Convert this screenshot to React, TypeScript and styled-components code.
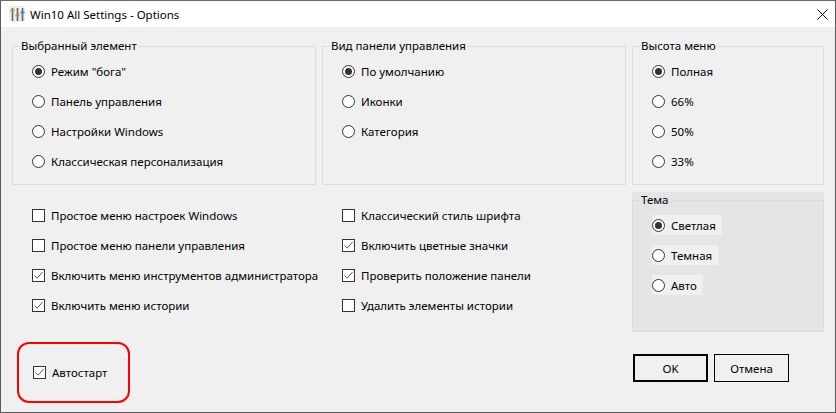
import * as React from 'react';
import styled, { createGlobalStyle } from 'styled-components';

const GlobalStyle = createGlobalStyle`
  html, body {
    margin: 0;
    padding: 0;
    background: #3a3a3a;
  }
`;

const Window = styled.div`
  box-sizing: border-box;
  width: 836px;
  height: 413px;
  display: flex;
  flex-direction: column;
  border: 1px solid #5a5a5a;
  border-top-color: #6a6a6a;
  background: #f0f0f0;
  color: #000;
  font-family: "Noto Sans", "Open Sans", sans-serif;
  font-size: 11.5px;
  overflow: hidden;
`;

const TitleBar = styled.div`
  flex: none;
  height: 26px;
  display: flex;
  align-items: center;
  background: #fff;
  padding-left: 8px;
`;

const TitleText = styled.span`
  margin-left: 5px;
  white-space: nowrap;
`;

const CloseIcon = styled.svg`
  margin-left: auto;
  margin-right: 7px;
  width: 11px;
  height: 11px;
`;

const Body = styled.div`
  flex: 1;
  display: flex;
  flex-direction: column;
  padding: 13px 11px 0 11px;
`;

const Row = styled.div`
  display: grid;
  grid-template-columns: 304px 304px 192px;
  column-gap: 6px;
`;

const Group = styled.fieldset`
  box-sizing: border-box;
  margin: 0;
  min-width: 0;
  height: 145px;
  padding: 0 0 0 19px;
  border: 1px solid #dcdcdc;
`;

const Legend = styled.legend`
  padding: 0 1px;
  margin-left: -12px;
  line-height: 12px;
`;

const OptionList = styled.div`
  display: flex;
  flex-direction: column;
  gap: 10px;
  padding-top: 9px;
`;

const ThemePanel = styled.div`
  box-sizing: border-box;
  height: 140px;
  margin-top: 7px;
  background: #e5e5e5;
  padding-top: 8px;
`;

const ThemeBorder = styled.div`
  box-sizing: border-box;
  height: 132px;
  border: 1px solid #dcdcdc;
  padding-left: 19px;
`;

const ThemeLegend = styled.span`
  display: block;
  width: fit-content;
  margin: -9px 0 0 -12px;
  padding: 0 1px;
  background: #e5e5e5;
  line-height: 16px;
`;

const ThemeOptions = styled(OptionList)`
  padding-top: 7px;
`;

const Option = styled.label<{ $boxed?: boolean }>`
  height: 20px;
  width: fit-content;
  display: flex;
  align-items: center;
  gap: 6px;
  white-space: nowrap;
  padding-right: ${p => (p.$boxed ? '6px' : '0')};
  background: ${p => (p.$boxed ? '#f0f0f0' : 'transparent')};
`;

const RadioMark = styled.span<{ $on?: boolean }>`
  box-sizing: border-box;
  flex: none;
  width: 13px;
  height: 13px;
  border-radius: 50%;
  border: 1px solid #333;
  background: #fff;
  display: flex;
  align-items: center;
  justify-content: center;

  &::after {
    content: "";
    display: ${p => (p.$on ? 'block' : 'none')};
    width: 7px;
    height: 7px;
    border-radius: 50%;
    background: #333;
  }
`;

const CheckBox = styled.span`
  box-sizing: border-box;
  flex: none;
  width: 13px;
  height: 13px;
  border: 1px solid #333;
  background: #fff;
  display: flex;
`;

const Settings = styled.div`
  grid-column: 1 / 3;
  display: grid;
  grid-template-columns: 310px 300px;
  padding: 11px 0 0 20px;
`;

const Footer = styled.div`
  display: flex;
  justify-content: space-between;
  align-items: flex-start;
  margin-top: 10px;
`;

const Highlight = styled.div`
  box-sizing: border-box;
  width: 113px;
  height: 61px;
  margin-left: 5px;
  padding-left: 14px;
  display: flex;
  align-items: center;
  border: 2px solid #f00;
  border-radius: 12px;
`;

const Buttons = styled.div`
  display: flex;
  gap: 6px;
  margin: 12px 35px 0 0;
`;

const Button = styled.button<{ $primary?: boolean }>`
  box-sizing: border-box;
  width: 75px;
  height: 28px;
  padding: 0;
  border: ${p => (p.$primary ? '2px' : '1px')} solid #000;
  border-radius: 0;
  background: #f0f0f0;
  font: inherit;
  color: #000;
`;

const IconTile = styled.span`
  flex: none;
  width: 16px;
  height: 16px;
  display: flex;
  background: #eeeeee;
  border-radius: 2px;
`;

const Radio = ({ label, on, boxed }: { label: string; on?: boolean; boxed?: boolean }) => (
  <Option $boxed={boxed}>
    <RadioMark $on={on} />
    {label}
  </Option>
);

const Check = ({ label, on }: { label: string; on?: boolean }) => (
  <Option>
    <CheckBox>
      {on && (
        <svg width="11" height="11" viewBox="0 0 11 11">
          <path d="M1.5 5.5 L4.2 8.2 L9.7 1.8" fill="none" stroke="#555" strokeWidth="1" />
        </svg>
      )}
    </CheckBox>
    {label}
  </Option>
);

const AppIcon = () => (
  <IconTile>
    <svg width="16" height="16" viewBox="0 0 16 16">
      <path d="M3.5 2v13M8.5 2v13M13.5 2v13" stroke="#666" strokeWidth="1.6" />
      <path d="M1.5 4.5h4" stroke="#7ab648" strokeWidth="2" />
      <path d="M6.5 9.5h4" stroke="#e8762c" strokeWidth="2" />
      <path d="M11.5 6.5h4" stroke="#2f8fe0" strokeWidth="2" />
    </svg>
  </IconTile>
);

const App = () => (
  <>
    <GlobalStyle />
    <Window>
      <TitleBar>
        <AppIcon />
        <TitleText>Win10 All Settings - Options</TitleText>
        <CloseIcon viewBox="0 0 11 11">
          <path d="M0.5 0.5 L10.5 10.5 M10.5 0.5 L0.5 10.5" stroke="#111" strokeWidth="1" />
        </CloseIcon>
      </TitleBar>
      <Body>
        <Row>
          <Group>
            <Legend>Выбранный элемент</Legend>
            <OptionList>
              <Radio label={'Режим "бога"'} on />
              <Radio label="Панель управления" />
              <Radio label="Настройки Windows" />
              <Radio label="Классическая персонализация" />
            </OptionList>
          </Group>
          <Group>
            <Legend>Вид панели управления</Legend>
            <OptionList>
              <Radio label="По умолчанию" on />
              <Radio label="Иконки" />
              <Radio label="Категория" />
            </OptionList>
          </Group>
          <Group>
            <Legend>Высота меню</Legend>
            <OptionList>
              <Radio label="Полная" on />
              <Radio label="66%" />
              <Radio label="50%" />
              <Radio label="33%" />
            </OptionList>
          </Group>
        </Row>
        <Row>
          <Settings>
            <OptionList>
              <Check label="Простое меню настроек Windows" />
              <Check label="Простое меню панели управления" />
              <Check label="Включить меню инструментов администратора" on />
              <Check label="Включить меню истории" on />
            </OptionList>
            <OptionList>
              <Check label="Классический стиль шрифта" />
              <Check label="Включить цветные значки" on />
              <Check label="Проверить положение панели" on />
              <Check label="Удалить элементы истории" />
            </OptionList>
          </Settings>
          <ThemePanel>
            <ThemeBorder>
              <ThemeLegend>Тема</ThemeLegend>
              <ThemeOptions>
                <Radio label="Светлая" on boxed />
                <Radio label="Темная" boxed />
                <Radio label="Авто" boxed />
              </ThemeOptions>
            </ThemeBorder>
          </ThemePanel>
        </Row>
        <Footer>
          <Highlight>
            <Check label="Автостарт" on />
          </Highlight>
          <Buttons>
            <Button $primary>OK</Button>
            <Button>Отмена</Button>
          </Buttons>
        </Footer>
      </Body>
    </Window>
  </>
);

export default App;
